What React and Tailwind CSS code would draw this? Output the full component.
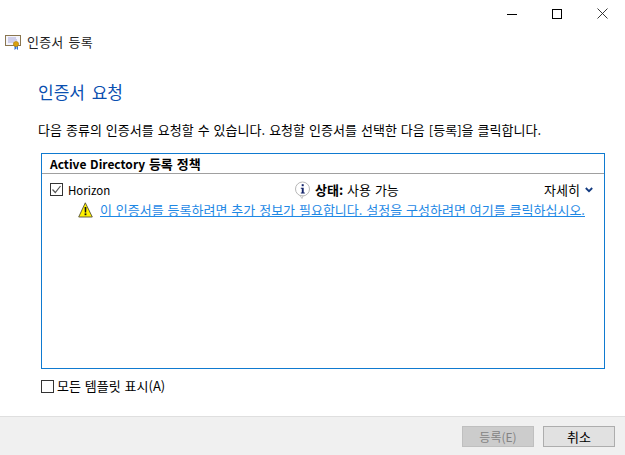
function CertIcon() {
  return (
    <svg width="17" height="15" viewBox="0 0 17 15" className="shrink-0">
      <rect x="0.5" y="0.5" width="15" height="10" fill="#f4f4fb" stroke="#8a7650" />
      <path d="M3 3h8M3 5h9M3 7h6" stroke="#a9a9d8" strokeWidth="1" />
      <path d="M9.5 10v5l1.5-1.2v-3.8zM11.5 10v3.8l1.5 1.2v-5z" fill="#2f6fd0" />
      <circle cx="11" cy="9" r="2.6" fill="#d8a010" stroke="#a87808" strokeWidth="0.6" />
    </svg>
  );
}
function InfoIcon() {
  return (
    <svg width="17" height="18" viewBox="0 0 17 18" className="shrink-0">
      <circle cx="8.5" cy="8" r="7" fill="#fff" stroke="#b8b8b8" />
      <path d="M6 14.5l2 3 1-2.6z" fill="#fff" stroke="#b8b8b8" strokeWidth="0.8" />
      <path d="M8.7 3.2v2" stroke="#14246a" strokeWidth="2" />
      <path d="M6.8 6.8h2.9v4.6h1.1v1h-4v-1h1v-3.6h-1z" fill="#14246a" />
    </svg>
  );
}
function WarnIcon() {
  return (
    <svg width="15" height="16" viewBox="0 0 15 16" className="shrink-0">
      <path d="M7.3 0.8L14.3 15H0.7z" fill="#fff200" stroke="#55503a" strokeWidth="0.9" strokeLinejoin="round" />
      <path d="M6.6 5h1.8l-.2 5.6H6.8z" fill="#111" />
      <rect x="6.6" y="11.4" width="1.8" height="1.8" fill="#111" />
    </svg>
  );
}
function Check({ checked }) {
  return (
    <span className="w-[13px] h-[13px] border border-[#333333] bg-white shrink-0 flex items-center justify-center">
      {checked && (
        <svg width="11" height="11" viewBox="0 0 11 11">
          <path d="M1.5 5.5l2.8 3 5.2-6.5" fill="none" stroke="#555555" strokeWidth="1.2" />
        </svg>
      )}
    </span>
  );
}
export default function App() {
  return (
    <div className="w-[625px] h-[455px] bg-white flex flex-col overflow-hidden text-[#000000] text-[13px] leading-[16px] [word-spacing:1px] font-['Noto_Sans_CJK_KR','Noto_Sans',sans-serif]">
      <div className="h-[27px] flex justify-end items-center gap-[35px] pr-[17px] shrink-0">
        <svg width="10" height="10" viewBox="0 0 10 10"><path d="M0 5.5h10" stroke="#000" /></svg>
        <svg width="10" height="10" viewBox="0 0 10 10"><rect x="0.5" y="0.5" width="9" height="9" fill="none" stroke="#000" /></svg>
        <svg width="11" height="11" viewBox="0 0 11 11"><path d="M0.5 0.5l10 10M10.5 0.5l-10 10" stroke="#222" strokeWidth="0.9" /></svg>
      </div>
      <div className="h-[30px] pl-[5px] flex items-center gap-[5px] shrink-0">
        <CertIcon />
        <span className="text-[#222222] tracking-[0.2px] [word-spacing:2px]">인증서 등록</span>
      </div>
      <div className="pl-[38px] flex flex-col flex-1">
        <div className="mt-[24px] h-[22px] text-[17px] leading-[22px] [word-spacing:3px] text-[#0a4fb0]">인증서 요청</div>
        <div className="mt-[19px] h-[16px] whitespace-nowrap tracking-[0.03px]">다음 종류의 인증서를 요청할 수 있습니다. 요청할 인증서를 선택한 다음 [등록]을 클릭합니다.</div>
        <div className="mt-[15px] ml-[3px] w-[564px] h-[216px] border border-[#0f7ad0] flex flex-col">
          <div className="h-[20px] pl-[8px] border-b border-[#a0a0a0] font-bold flex items-center whitespace-pre"><span className="text-[12px]">Active Directory </span><span>등록 정책</span></div>
          <div className="h-[28px] pt-[3px] pl-[8px] pr-[11px] flex items-center">
            <div className="w-[244px] flex items-center gap-[5px]">
              <Check checked />
              <span className="text-[11.5px]">Horizon</span>
            </div>
            <div className="flex items-center gap-[4px]">
              <InfoIcon />
              <span className="whitespace-nowrap"><b>상태:</b> 사용 가능</span>
            </div>
            <div className="ml-auto flex items-center gap-[5px]">
              <span>자세히</span>
              <svg width="8" height="6" viewBox="0 0 8 6"><path d="M0.8 1l3.2 3.2L7.2 1" fill="none" stroke="#123a80" strokeWidth="1.8" /></svg>
            </div>
          </div>
          <div className="pl-[36px] flex items-center gap-[7px] h-[15px]">
            <WarnIcon />
            <span className="text-[#1e88e5] underline whitespace-nowrap">이 인증서를 등록하려면 추가 정보가 필요합니다. 설정을 구성하려면 여기를 클릭하십시오.</span>
          </div>
        </div>
        <div className="mt-[9px] ml-[3px] flex items-center gap-[3px]">
          <Check />
          <span className="whitespace-nowrap">모든 템플릿 표시(A)</span>
        </div>
      </div>
      <div className="h-[39px] bg-[#f0f0f0] border-t border-[#dfdfdf] flex justify-end items-start pt-[9px] pr-[10px] gap-[9px] shrink-0">
        <div className="w-[72px] h-[21px] bg-[#cccccc] border border-[#bfbfbf] text-[#838383] text-[12px] flex items-center justify-center">등록(E)</div>
        <div className="w-[72px] h-[21px] bg-[#e1e1e1] border border-[#adadad] flex items-center justify-center">취소</div>
      </div>
    </div>
  );
}
